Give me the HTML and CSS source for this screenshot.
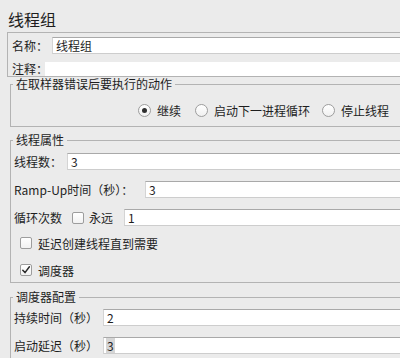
FILE: index.html
```html
<!DOCTYPE html>
<html lang="zh">
<head>
<meta charset="utf-8">
<title>线程组</title>
<link rel="stylesheet" href="styles.css">
</head>
<body>
<div class="page">
  <h1 class="title">线程组</h1>
  <div class="namepanel">
    <div class="row r-name"><span class="lbl w-name">名称：</span><div class="field">线程组</div></div>
    <div class="row r-note"><span class="lbl w-note">注释：</span><div class="field note"></div></div>
  </div>

  <fieldset class="group g-error">
    <legend>在取样器错误后要执行的动作</legend>
    <div class="radios">
      <label class="radio"><span class="dot on"></span>继续</label>
      <label class="radio"><span class="dot"></span>启动下一进程循环</label>
      <label class="radio r3"><span class="dot"></span>停止线程</label>
    </div>
  </fieldset>

  <fieldset class="group g-thread">
    <legend>线程属性</legend>
    <div class="frow first"><span class="lbl w-threads">线程数：</span><div class="field">3</div></div>
    <div class="frow"><span class="lbl w-ramp">Ramp-Up时间（秒）：</span><div class="field">3</div></div>
    <div class="frow"><span class="lbl w-loop">循环次数</span><span class="cb"></span><span class="lbl w-forever">永远</span><div class="field">1</div></div>
    <div class="crow c1"><span class="cb"></span><span class="lbl">延迟创建线程直到需要</span></div>
    <div class="crow c2"><span class="cb checked"><svg width="10" height="10" viewBox="0 0 10 10"><path d="M1.8 5.2 L4 7.6 L8.4 1.8" fill="none" stroke="#2a2a2a" stroke-width="1.5" stroke-linecap="round" stroke-linejoin="round"/></svg></span><span class="lbl">调度器</span></div>
  </fieldset>

  <fieldset class="group g-sched">
    <legend>调度器配置</legend>
    <div class="frow first"><span class="lbl w-dur">持续时间（秒）</span><div class="field">2</div></div>
    <div class="frow"><span class="lbl w-dur">启动延迟（秒）</span><div class="field sel"><span class="hl">3</span></div></div>
  </fieldset>
</div>
</body>
</html>
```

FILE: styles.css
```css
html, body {
  margin: 0;
  padding: 0;
}
body {
  background: #ebebeb;
  width: 400px;
  height: 358px;
  overflow: hidden;
  font-family: "Noto Sans CJK SC", "Noto Sans", sans-serif;
  font-size: 12px;
  color: #1e1e1e;
}
.page {
  width: 440px;
}
.title {
  margin: 0;
  height: 32px;
  box-sizing: border-box;
  padding: 8px 0 0 8px;
  font-size: 16px;
  line-height: 22px;
  font-weight: normal;
}
.namepanel {
  margin-left: 7px;
  border: 1px solid #b3b3b3;
  height: 43px;
}
.row {
  display: flex;
  align-items: center;
  padding-left: 4px;
}
.r-name {
  padding-top: 4px;
}
.r-note {
  margin-top: 8px;
  height: 14px;
}
.lbl {
  line-height: 17px;
  white-space: nowrap;
  flex: none;
}
.r-note .lbl {
  line-height: 14px;
}
.w-name { width: 40px; }
.w-note { width: 33px; }
.field {
  flex: 1;
  height: 17px;
  box-sizing: border-box;
  background: #fff;
  border-top: 1px solid #a9a9a9;
  border-bottom: 1px solid #cdcdcd;
  border-left: 1px solid #d4d4d4;
  line-height: 15px;
  padding-left: 3px;
}
.field.note {
  height: 14px;
  border: none;
}
.group {
  margin: 0 0 0 10px;
  padding: 0;
  border: 1px solid #b3b3b3;
  min-width: 0;
}
.group legend {
  margin-left: 2px;
  padding: 0 3px;
  line-height: 14px;
  font-size: 12px;
}
.radios {
  display: flex;
  align-items: center;
  height: 18px;
  padding: 10px 0 7px 127px;
}
.radio {
  display: flex;
  align-items: center;
  margin-right: 14px;
}
.radio.r3 { margin-left: -2px; }
.dot {
  width: 13px;
  height: 13px;
  box-sizing: border-box;
  border: 1px solid #9d9d9d;
  border-radius: 50%;
  background: linear-gradient(#ffffff, #f0f0f0);
  margin-right: 6px;
  display: flex;
  align-items: center;
  justify-content: center;
}
.dot.on::after {
  content: "";
  width: 5px;
  height: 5px;
  border-radius: 50%;
  background: #2e2e2e;
}
.g-thread {
  margin-top: 6px;
  padding-bottom: 3px;
}
.frow {
  display: flex;
  align-items: center;
  padding-left: 3px;
  margin-top: 11px;
}
.frow.first {
  margin-top: 6px;
}
.w-threads { width: 53px; }
.w-ramp { width: 131px; }
.w-loop { width: 58px; }
.w-forever { width: 24px; margin-left: 5px; margin-right: 11px; }
.w-dur { width: 89px; }
.cb {
  width: 12px;
  height: 12px;
  box-sizing: border-box;
  border: 1px solid #9d9d9d;
  border-radius: 2px;
  background: linear-gradient(#ffffff, #f2f2f2);
  flex: none;
  display: flex;
  align-items: center;
  justify-content: center;
}
.crow {
  display: flex;
  align-items: center;
  height: 18px;
  padding-left: 9px;
}
.crow .lbl {
  margin-left: 6px;
}
.crow.c1 { margin-top: 8px; }
.crow.c2 { margin-top: 9px; }
.g-sched {
  margin-top: 7px;
  padding-bottom: 10px;
}
.g-sched .frow.first {
  margin-top: 5px;
}
.field.sel {
  padding-left: 2px;
}
.hl {
  display: inline-block;
  height: 15px;
  padding: 0 1px;
  background: #d5d5d5;
}
```
